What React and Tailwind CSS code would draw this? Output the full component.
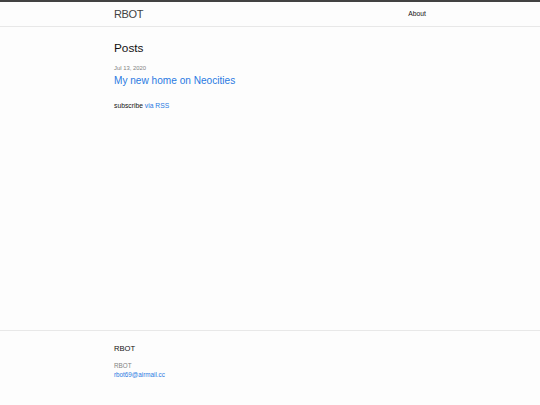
export default function App() {
    return (
        <div className="min-h-[405px] flex flex-col bg-[#fdfdfd] text-[#111] font-['Liberation_Sans',Arial,sans-serif] text-[6.75px] leading-[1.5]">
            <header className="border-t-[2px] border-t-[#424242] border-b border-b-[#e8e8e8] min-h-[24px]">
                <div className="w-[312px] mx-auto flex justify-between items-center">
                    <a href="#" className="text-[11px] leading-[24px] tracking-[-0.4px] text-[#424242]">RBOT</a>
                    <nav>
                        <a href="#" className="text-[6.75px] leading-[24px] text-[#111]">About</a>
                    </nav>
                </div>
            </header>

            <main className="flex-1 py-[12.7px]">
                <div className="w-[312px] mx-auto">
                    <h2 className="text-[11.8px] mb-[5.3px] font-normal">Posts</h2>
                    <ul className="mb-[12.7px]">
                        <li>
                            <span className="text-[5.9px] text-[#828282]">Jul 13, 2020</span>
                            <h3 className="font-normal">
                                <a href="#" className="block text-[10.1px] text-[#2a7ae2]">My new home on Neocities</a>
                            </h3>
                        </li>
                    </ul>
                    <p className="mt-[12.7px]">subscribe <a href="#" className="text-[#2a7ae2]">via RSS</a></p>
                </div>
            </main>

            <footer className="border-t border-t-[#e8e8e8] py-[12.7px]">
                <div className="w-[312px] mx-auto">
                    <h2 className="text-[7.6px] mb-[6px] font-normal text-[#111]">RBOT</h2>
                    <ul className="text-[6.3px] text-[#828282] mb-[12.6px]">
                        <li>RBOT</li>
                        <li><a href="#" className="text-[#2a7ae2]">rbot69@airmail.cc</a></li>
                    </ul>
                </div>
            </footer>
        </div>
    );
}
